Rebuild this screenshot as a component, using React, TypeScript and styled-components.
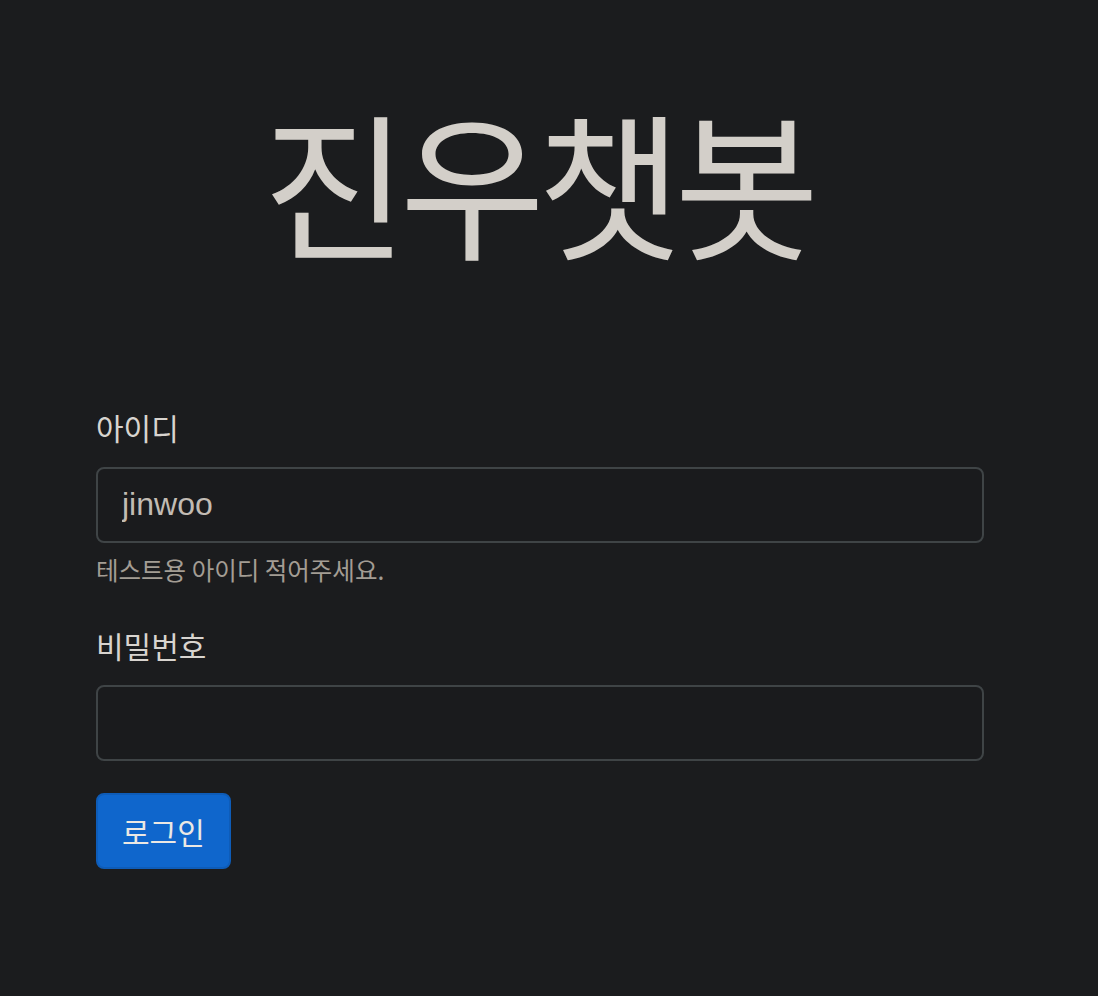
import React from "react";
import styled, { createGlobalStyle } from "styled-components";

const GlobalStyle = createGlobalStyle`
  html, body {
    margin: 0;
    padding: 0;
    background: #1b1c1e;
  }
  body {
    font-family: "Liberation Sans", "Noto Sans CJK KR", sans-serif;
    color: #d6d2cd;
  }
  * { box-sizing: border-box; }
`;

const Page = styled.div`
  min-height: 996px;
  background: #1b1c1e;
  padding: 0 114px 0 96px;
`;

const Title = styled.h1`
  margin: 0 0 128px 0;
  padding-top: 85px;
  padding-right: 6px;
  text-align: center;
  font-family: "Noto Sans CJK KR", sans-serif;
  font-weight: 400;
  font-size: 158px;
  line-height: 1.2;
  letter-spacing: -8px;
  color: #d3cfc9;
`;

const Form = styled.form`
  display: flex;
  flex-direction: column;
  align-items: flex-start;
`;

const Group = styled.div`
  display: flex;
  flex-direction: column;
  width: 100%;
  margin-bottom: 32px;
`;

const Label = styled.label`
  font-family: "Noto Sans CJK KR", sans-serif;
  font-size: 30px;
  line-height: 48px;
  margin-bottom: 16px;
  color: #d8d4cf;
`;

const Input = styled.input`
  width: 100%;
  height: 76px;
  padding: 12px 24px;
  font-family: "Liberation Sans", "Noto Sans CJK KR", sans-serif;
  font-size: 32px;
  line-height: 48px;
  color: #c2bcb4;
  background: #1a1b1d;
  border: 2px solid #3f4446;
  border-radius: 8px;
  outline: none;
`;

const Help = styled.small`
  display: block;
  margin-top: 8px;
  font-family: "Noto Sans CJK KR", sans-serif;
  font-size: 24.5px;
  line-height: 38px;
  color: #a39d94;
`;

const Button = styled.button`
  height: 76px;
  padding: 12px 24px;
  font-family: "Noto Sans CJK KR", sans-serif;
  font-size: 30px;
  line-height: 48px;
  color: #ebe8e4;
  background: #0f66cc;
  border: 2px solid #0e5cb8;
  border-radius: 8px;
  cursor: pointer;
`;

export default function App() {
  return (
    <>
      <GlobalStyle />
      <Page>
        <Title>진우챗봇</Title>
        <Form onSubmit={(e) => e.preventDefault()}>
          <Group>
            <Label htmlFor="uid">아이디</Label>
            <Input id="uid" type="text" defaultValue="jinwoo" />
            <Help>테스트용 아이디 적어주세요.</Help>
          </Group>
          <Group>
            <Label htmlFor="pw">비밀번호</Label>
            <Input id="pw" type="password" />
          </Group>
          <Button type="submit">로그인</Button>
        </Form>
      </Page>
    </>
  );
}
